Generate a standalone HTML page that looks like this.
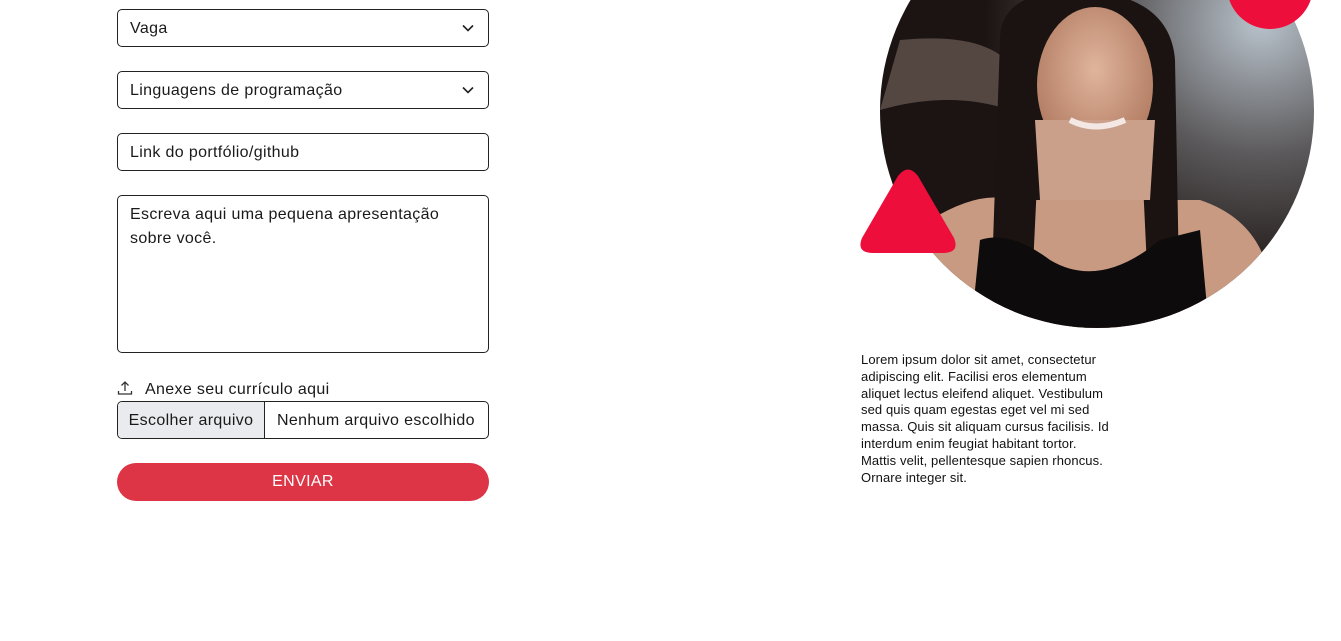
<!DOCTYPE html>
<html><head><meta charset="utf-8"><style>
*{box-sizing:border-box;margin:0;padding:0}
body{width:1341px;height:641px;background:#fff;position:relative;overflow:hidden;font-family:"Liberation Sans",sans-serif;color:#1a1a1a;font-size:16px;letter-spacing:.35px}
.f{position:absolute;left:117px;width:372px;border:1px solid #222;border-radius:5px;background:#fff;padding-left:12px}
.sel{height:38px;line-height:37px}
.sel svg{position:absolute;right:14px;top:14px}
p.t{position:absolute;left:861px;top:352px;width:300px;font-size:13px;line-height:16.8px;color:#111;letter-spacing:.1px}
</style></head><body>
<div class="f sel" style="top:9px">Vaga<svg width="12" height="8" viewBox="0 0 12 8"><path d="M1 1.5l5 5 5-5" fill="none" stroke="#222" stroke-width="1.6"/></svg></div>
<div class="f sel" style="top:71px">Linguagens de programação<svg width="12" height="8" viewBox="0 0 12 8"><path d="M1 1.5l5 5 5-5" fill="none" stroke="#222" stroke-width="1.6"/></svg></div>
<div class="f sel" style="top:133px">Link do portfólio/github</div>
<div class="f" style="top:195px;height:158px;padding-top:7px;line-height:24px">Escreva aqui uma pequena apresentação<br>sobre você.</div>
<div style="position:absolute;left:117px;top:380px;line-height:18px"><svg width="16" height="16" viewBox="0 0 16 16" style="vertical-align:-2px;margin-right:12px"><path d="M8 11V2M4.5 5.5L8 2l3.5 3.5M1.5 11v3h13v-3" fill="none" stroke="#333" stroke-width="1.3"/></svg>Anexe seu currículo aqui</div>
<div class="f" style="top:401px;height:38px;padding:0;display:flex;overflow:hidden;line-height:37px">
<div style="width:147px;background:#e9ebee;border-right:1px solid #222;text-align:center">Escolher arquivo</div>
<div style="padding-left:12px;white-space:nowrap">Nenhum arquivo escolhido</div></div>
<div style="position:absolute;left:117px;top:463px;width:372px;height:38px;border-radius:19px;background:#dd3546;color:#fff;text-align:center;line-height:38px">ENVIAR</div>
<svg style="position:absolute;left:0;top:0" width="1341" height="641">
<defs>
<clipPath id="c"><circle cx="1097" cy="111" r="217"/></clipPath>
<radialGradient id="bg" cx="0.85" cy="0.3" r="0.6"><stop offset="0" stop-color="#b9c3cc"/><stop offset="0.5" stop-color="#5c5a5c"/><stop offset="1" stop-color="#1c1412"/></radialGradient>
<radialGradient id="sk" cx="0.5" cy="0.4" r="0.6"><stop offset="0" stop-color="#e0b49c"/><stop offset="1" stop-color="#b07a60"/></radialGradient>
</defs>
<g clip-path="url(#c)">
<rect x="870" y="-110" width="460" height="440" fill="url(#bg)"/>
<path d="M900 40 Q1000 30 1020 80 L1010 110 Q950 90 880 110Z" fill="#7a6860" opacity=".6"/>
<path d="M930 220 Q980 190 1010 200 L1200 200 Q1260 220 1270 280 L1270 340 L930 340Z" fill="#c89a82"/>
<path d="M1000 40 Q1000 -10 1080 -10 Q1170 -5 1175 60 L1180 330 L1150 330 L1140 120 L1040 120 L1030 330 L990 330Z" fill="#1a1311"/>
<ellipse cx="1095" cy="85" rx="58" ry="78" fill="url(#sk)"/>
<path d="M1035 120 L1155 120 L1150 200 L1040 200Z" fill="#caa08a"/>
<path d="M980 240 Q1010 230 1050 260 Q1100 290 1160 240 L1200 230 L1210 340 L970 340Z" fill="#0d0b0b"/>
<path d="M1070 120 Q1095 133 1125 120" fill="none" stroke="#f3e8e4" stroke-width="6"/>
</g>
<circle cx="1270" cy="-14" r="43" fill="#ee0e3b"/>
<path d="M898 176 Q908 163 918 176 L954 238 Q960 253 943 253 L873 253 Q856 253 862 238Z" fill="#ee0e3b"/>
</svg>
<p class="t">Lorem ipsum dolor sit amet, consectetur<br>adipiscing elit. Facilisi eros elementum<br>aliquet lectus eleifend aliquet. Vestibulum<br>sed quis quam egestas eget vel mi sed<br>massa. Quis sit aliquam cursus facilisis. Id<br>interdum enim feugiat habitant tortor.<br>Mattis velit, pellentesque sapien rhoncus.<br>Ornare integer sit.</p>
</body></html>
